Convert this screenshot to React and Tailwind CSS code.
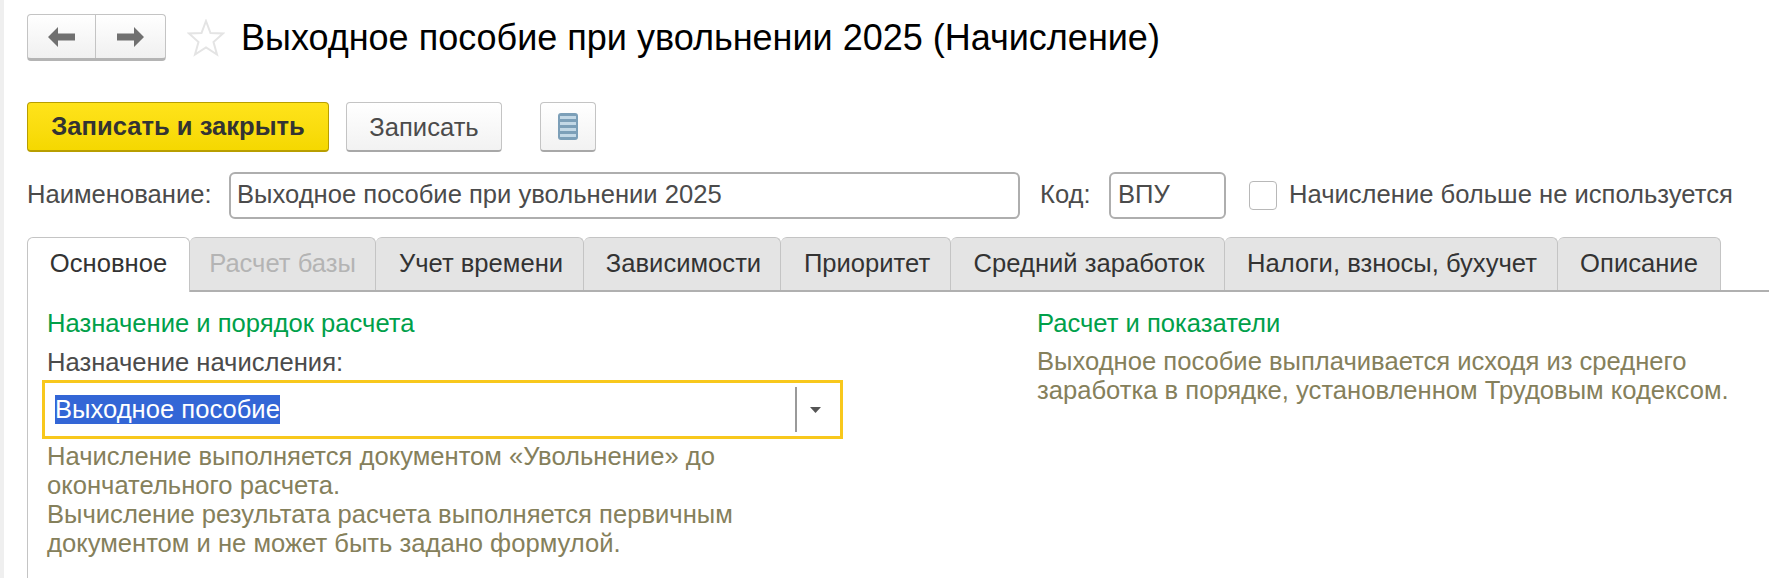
const font = { fontFamily: '"Liberation Sans", Arial, sans-serif' };

const tabs = [
  { label: "Основное", w: "w-[163px]", active: true },
  { label: "Расчет базы", w: "w-[186px]", disabled: true },
  { label: "Учет времени", w: "w-[208px] pl-[3px]" },
  { label: "Зависимости", w: "w-[197px] pl-[3px]" },
  { label: "Приоритет", w: "w-[170px] pl-[3px]" },
  { label: "Средний заработок", w: "w-[274px] pl-[3px]" },
  { label: "Налоги, взносы, бухучет", w: "w-[333px] pl-[2px]" },
  { label: "Описание", w: "w-[163px]" },
];

function Arrow({ flip }) {
  return (
    <svg width="27" height="20" viewBox="0 0 27 20" style={flip ? { transform: "scaleX(-1)" } : undefined}>
      <path d="M0 10 L10 0 V6.500 H27 V13.500 H10 V20 Z" fill="#707070" />
    </svg>
  );
}

export default function App() {
  return (
    <div className="w-[1769px] h-[578px] overflow-hidden bg-white text-[#4b4b4b] border-l-4 border-[#efefef] text-[25.6px]" style={font}>
      <div className="pl-[23px] pt-[14px]">
        {/* top bar */}
        <div className="flex items-center h-[47px]">
          <div className="flex w-[139px] h-[47px] rounded border border-[#c4c4c4] border-b-[3px] border-b-[#b4b4b4] bg-gradient-to-b from-white to-[#f0f0f0]">
            <button className="w-[68px] flex items-center justify-center border-r border-[#c4c4c4]"><Arrow /></button>
            <button className="flex-1 flex items-center justify-center"><Arrow flip /></button>
          </div>
          <svg className="ml-[21px]" width="38" height="38" viewBox="0 0 38 38">
            <path d="M19 2 L23.500 14 L36 14.500 L26.500 23 L30 35.500 L19 28.500 L8 35.500 L11.500 23 L2 14.500 L14.500 14 Z" fill="none" stroke="#e4e4e4" strokeWidth="2" />
          </svg>
          <h1 className="ml-[16px] text-[36px] leading-[40px] text-black font-normal whitespace-nowrap">Выходное пособие при увольнении 2025 (Начисление)</h1>
        </div>
        {/* command bar */}
        <div className="flex items-center mt-[41px] h-[50px]">
          <button className="w-[302px] h-[50px] rounded border border-[#b89e00] border-b-[2px] bg-gradient-to-b from-[#ffe31a] to-[#f5d800] font-bold text-[#333]">Записать и закрыть</button>
          <button className="ml-[17px] w-[156px] h-[50px] rounded border border-[#c4c4c4] border-b-[2px] border-b-[#a8a8a8] bg-gradient-to-b from-white to-[#f2f2f2] pt-[2px]">Записать</button>
          <button className="ml-[38px] w-[56px] h-[50px] rounded border border-[#c4c4c4] border-b-[2px] border-b-[#a8a8a8] bg-gradient-to-b from-white to-[#f2f2f2] flex items-center justify-center">
            <svg width="20" height="27" viewBox="0 0 20 27">
              <rect x="0" y="0" width="20" height="27" rx="3" fill="#7c9fb8" />
              <rect x="2" y="3" width="16" height="3" fill="#c3d8e6" />
              <rect x="2" y="9" width="16" height="3" fill="#c3d8e6" />
              <rect x="2" y="15" width="16" height="3" fill="#c3d8e6" />
              <rect x="2" y="21" width="16" height="3" fill="#c3d8e6" />
            </svg>
          </button>
        </div>
        {/* name row */}
        <div className="flex items-center mt-[20px] h-[47px]">
          <span className="w-[202px] whitespace-nowrap pb-[2px]">Наименование:</span>
          <div className="w-[791px] h-[47px] rounded-md border-2 border-[#aeaeae] flex items-center pl-[6px] pb-[2px] whitespace-nowrap">Выходное пособие при увольнении 2025</div>
          <span className="ml-5 w-[69px] pb-[2px]">Код:</span>
          <div className="w-[117px] h-[47px] rounded-md border-2 border-[#aeaeae] flex items-center pl-[7px] pb-[2px]">ВПУ</div>
          <div className="ml-[23px] w-[28px] h-[29px] rounded border border-[#b8b8b8]"></div>
          <span className="ml-[12px] whitespace-nowrap pb-[2px]">Начисление больше не используется</span>
        </div>
        {/* tabs */}
        <div className="flex mt-[18px] h-[55px] border-b-2 border-[#b0b0b0]">
          {tabs.map((t) => (
            <div
              key={t.label}
              className={
                t.active
                  ? `${t.w} h-[55px] flex items-center justify-center rounded-t-md border border-b-0 border-[#c4c4c4] bg-white text-[#333] z-10 pb-[3px]`
                  : t.disabled
                  ? `${t.w} h-[53px] flex items-center justify-center rounded-t-md border border-l-0 border-b-0 border-[#c4c4c4] bg-[#e4e4e4] text-[#b4b4b4] pb-[2px]`
                  : `${t.w} h-[53px] flex items-center justify-center rounded-t-md border border-l-0 border-b-0 border-[#c4c4c4] bg-[#e4e4e4] text-[#333] pb-[2px]`
              }
            >
              {t.label}
            </div>
          ))}
        </div>
        {/* tab body */}
        <div className="flex border-l border-[#c4c4c4] h-[300px]">
          <div className="w-[1009px] pl-[19px] pt-[15px]">
            <div className="leading-[32px] text-[#00a04a]">Назначение и порядок расчета</div>
            <div className="leading-[32px] mt-[7px]">Назначение начисления:</div>
            <div className="mt-[2px] -ml-[5px] w-[801px] h-[59px] border-[3px] border-[#f8c81c] flex items-center pl-[10px]">
              <span className="bg-[#3366d6] text-white leading-[29px] whitespace-nowrap">Выходное пособие</span>
              <div className="ml-auto flex items-center h-[45px] border-l-2 border-[#9a9a9a] pl-[13px] pr-[19px]">
                <svg width="11" height="6" viewBox="0 0 11 6"><path d="M0 0 H11 L5.500 6 Z" fill="#555" /></svg>
              </div>
            </div>
            <div className="mt-[3px] leading-[29px] text-[#85805b]">
              Начисление выполняется документом «Увольнение» до<br />
              окончательного расчета.<br />
              Вычисление результата расчета выполняется первичным<br />
              документом и не может быть задано формулой.
            </div>
          </div>
          <div className="pt-[15px]">
            <div className="leading-[32px] text-[#00a04a]">Расчет и показатели</div>
            <div className="mt-[8px] leading-[29px] text-[#85805b]">
              Выходное пособие выплачивается исходя из среднего<br />
              заработка в порядке, установленном Трудовым кодексом.
            </div>
          </div>
        </div>
      </div>
    </div>
  );
}
